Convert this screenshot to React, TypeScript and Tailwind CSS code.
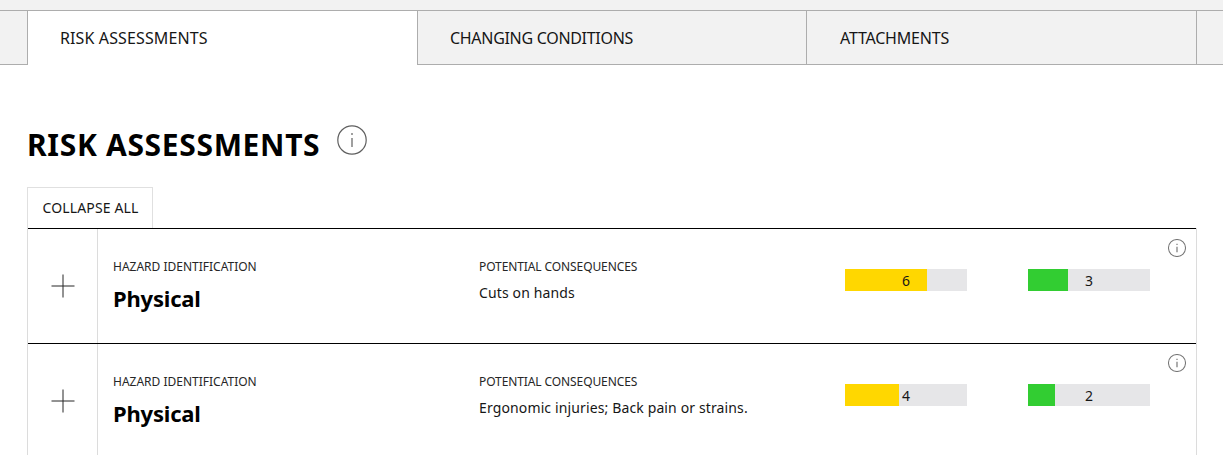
const font = "font-['Noto_Sans',sans-serif]";

const tabs = [
  { label: "RISK ASSESSMENTS", className: "-mb-px w-[391px] border-x bg-white pl-[32px] tracking-[0.12px]" },
  { label: "CHANGING CONDITIONS", className: "w-[389px] border-r pl-[32px] tracking-[-0.3px]" },
  { label: "ATTACHMENTS", className: "w-[390px] border-r pl-[33px] tracking-[-0.2px]" },
];

const risks = [
  { consequence: "Cuts on hands", before: 6, beforeWidth: 82, after: 3, afterWidth: 40 },
  { consequence: "Ergonomic injuries; Back pain or strains.", before: 4, beforeWidth: 54, after: 2, afterWidth: 27 },
];

function InfoIcon({ size, color }: { size: number; color: string }) {
  return (
    <svg width={size} height={size} viewBox="0 0 30 30" fill="none" stroke={color}>
      <circle cx="15" cy="15" r="14.2" strokeWidth={size > 20 ? 1.2 : 1.7} />
      <path d="M15 13v9" strokeWidth={size > 20 ? 1.2 : 2} />
      <path d="M15 8v2" strokeWidth={size > 20 ? 1.2 : 2} />
    </svg>
  );
}

function Bar({ value, width, color }: { value: number; width: number; color: string }) {
  return (
    <div className="relative h-[22px] w-[122px] bg-[#e6e6e8]">
      <div className={`h-full ${color}`} style={{ width }} />
      <span className="absolute inset-0 flex items-center justify-center text-[14px] text-[#161616]">
        {value}
      </span>
    </div>
  );
}

function RiskRow({ consequence, before, beforeWidth, after, afterWidth }: (typeof risks)[number]) {
  return (
    <div className="flex h-[115px] border-t border-black">
      <div className="flex w-[70px] shrink-0 items-center justify-center border-r border-[#dcdcdc]">
        <svg width="24" height="24" viewBox="0 0 24 24" stroke="#262626" strokeWidth="1">
          <path d="M12 0.5v23M0.5 12h23" />
        </svg>
      </div>
      <div className="flex w-[381px] shrink-0 flex-col pl-[15px] pt-[31px]">
        <div className="text-[12px] leading-[14px] text-[#262626]">HAZARD IDENTIFICATION</div>
        <div className="mt-[10px] text-[22px] font-bold leading-[28px] tracking-[-0.2px] text-black">Physical</div>
      </div>
      <div className="flex w-[366px] shrink-0 flex-col pt-[31px]">
        <div className="text-[12px] leading-[14px] tracking-[-0.1px] text-[#262626]">POTENTIAL CONSEQUENCES</div>
        <div className="mt-[9px] text-[14px] leading-[20px] tracking-[0.13px] text-[#161616]">{consequence}</div>
      </div>
      <div className="flex shrink-0 gap-[61px] pt-[40px]">
        <Bar value={before} width={beforeWidth} color="bg-[#ffd700]" />
        <Bar value={after} width={afterWidth} color="bg-[#32cd32]" />
      </div>
      <div className="ml-auto pr-[10px] pt-[10px]">
        <InfoIcon size={18} color="#777777" />
      </div>
    </div>
  );
}

export default function App() {
  return (
    <div className={`h-[455px] w-[1223px] overflow-hidden bg-white ${font}`}>
      <div className="h-[10px] bg-[#f2f2f2]" />
      <div className="flex h-[55px] border-y border-[#adadad] bg-[#f2f2f2]">
        <div className="w-[27px] shrink-0" />
        {tabs.map((tab) => (
          <div
            key={tab.label}
            className={`flex shrink-0 items-center border-[#adadad] text-[16px] text-[#161616] ${tab.className}`}
          >
            {tab.label}
          </div>
        ))}
      </div>
      <div className="px-[27px] pt-[60px]">
        <div className="flex items-start">
          <h1 className="text-[30px] font-bold leading-[40px] tracking-[0.67px] text-black">RISK ASSESSMENTS</h1>
          <div className="ml-[17px]">
            <InfoIcon size={30} color="#5f5f5f" />
          </div>
        </div>
        <button className="mt-[22px] block h-[41px] w-[126px] border border-b-0 border-[#e0e0e0] pb-[2px] pl-px text-[14px] tracking-[0.12px] text-[#161616]">
          COLLAPSE ALL
        </button>
        <div className="w-[1170px] border-x border-[#dcdcdc]">
          {risks.map((risk, i) => (
            <RiskRow key={i} {...risk} />
          ))}
        </div>
      </div>
    </div>
  );
}
